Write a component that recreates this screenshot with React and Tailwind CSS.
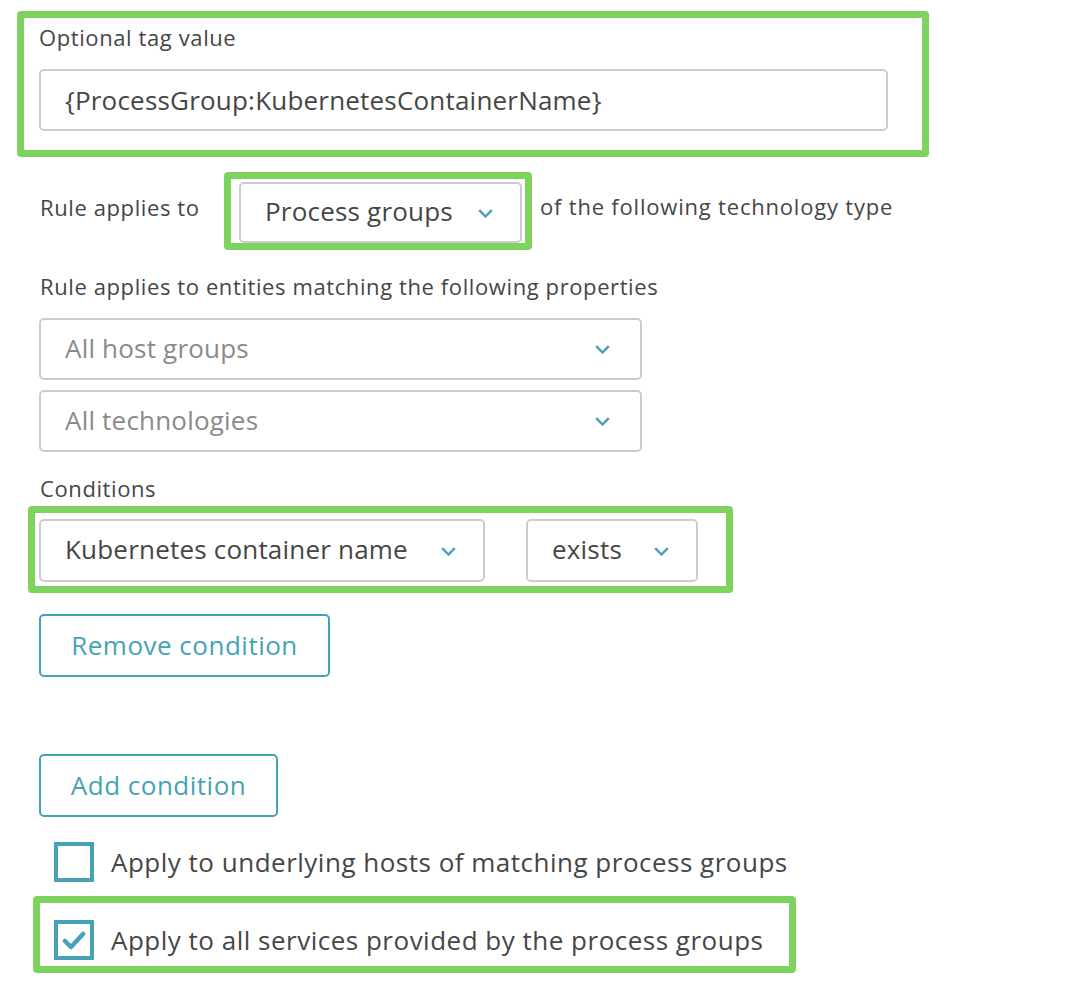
import React from "react";

const Chevron = () => (
  <svg width="15" height="9" viewBox="0 0 15 9" fill="none" className="shrink-0 mt-[4px]">
    <path d="M1.2 1.2 L7.5 7.5 L13.8 1.2" stroke="#45a3b5" strokeWidth="2.4" />
  </svg>
);

const Select = ({ label, muted = false, className = "" }) => (
  <div
    className={`flex items-center justify-between border-2 border-[#cccccc] rounded-[5px] bg-white pl-[24px] pr-[27px] pb-[3px] ${className}`}
  >
    <span className={`text-[26px] leading-none tracking-[0.2px] ${muted ? "text-[#8a8a8a]" : "text-[#454646]"}`}>
      {label}
    </span>
    <Chevron />
  </div>
);

export default function App() {
  return (
    <div
      className="w-[1078px] h-[1000px] bg-white text-[#454646] overflow-hidden"
      style={{ fontFamily: '"Open Sans", "Noto Sans", Arial, sans-serif' }}
    >
      {/* Optional tag value */}
      <div className="ml-[17px] mt-[11px] w-[912px] h-[146px] border-[7px] border-[#7ed35f] rounded-[4px] pl-[15px] pt-[5px]">
        <div className="text-[22px] leading-[28px] tracking-[0.6px]">Optional tag value</div>
        <div className="mt-[18px] w-[849px] h-[62px] border-2 border-[#cccccc] rounded-[5px] flex items-center pl-[24px]">
          <span className="text-[26px] leading-none tracking-[0.2px]">{"{ProcessGroup:KubernetesContainerName}"}</span>
        </div>
      </div>

      {/* Rule applies to row */}
      <div className="mt-[15px] flex items-start">
        <div className="ml-[40px] w-[184px] mt-[21px] text-[22px] leading-[28px] tracking-[0.6px]">Rule applies to</div>
        <div className="w-[308px] h-[78px] border-[7px] border-[#7ed35f] rounded-[4px] pl-[8px] pt-[3px]">
          <Select label="Process groups" className="w-[283px] h-[61px]" />
        </div>
        <div className="ml-[8px] mt-[20px] text-[22px] leading-[28px] tracking-[0.8px]">of the following technology type</div>
      </div>

      <div className="ml-[40px] mt-[22px] text-[22px] leading-[28px] tracking-[0.6px]">
        Rule applies to entities matching the following properties
      </div>

      <div className="ml-[39px] mt-[18px] flex flex-col gap-[10px]">
        <Select label="All host groups" muted className="w-[603px] h-[62px] pr-[30px]" />
        <Select label="All technologies" muted className="w-[603px] h-[62px] pr-[30px]" />
      </div>

      <div className="ml-[40px] mt-[22px] text-[22px] leading-[28px] tracking-[0.6px]">Conditions</div>

      <div className="ml-[28px] mt-[4px] w-[705px] h-[87px] border-[7px] border-[#7ed35f] rounded-[4px] pl-[4px] pt-[6px] flex items-start">
        <Select label="Kubernetes container name" className="w-[446px] h-[63px]" />
        <Select label="exists" className="ml-[41px] w-[172px] h-[63px]" />
      </div>

      <button className="ml-[39px] mt-[21px] w-[291px] h-[63px] border-2 border-[#45a3b5] rounded-[5px] text-[#45a3b5] text-[26px] leading-none tracking-[0.5px] flex items-center justify-center pb-[2px]">
        Remove condition
      </button>

      <button className="ml-[39px] mt-[77px] w-[239px] h-[63px] border-2 border-[#45a3b5] rounded-[5px] text-[#45a3b5] text-[26px] leading-none tracking-[0.5px] flex items-center justify-center pb-[2px]">
        Add condition
      </button>

      <div className="ml-[54px] mt-[25px] flex items-center h-[40px]">
        <div className="w-[40px] h-[40px] border-[4px] border-[#45a3b5] bg-white shrink-0" />
        <span className="ml-[17px] text-[26px] leading-none tracking-[0.5px]">
          Apply to underlying hosts of matching process groups
        </span>
      </div>

      <div className="ml-[33px] mt-[14px] w-[763px] h-[77px] border-[7px] border-[#7ed35f] rounded-[4px] pl-[14px] pt-[17px]">
        <div className="flex items-center h-[40px]">
          <div className="w-[40px] h-[40px] border-[4px] border-[#45a3b5] bg-white flex items-center justify-center shrink-0">
            <svg width="24" height="20" viewBox="0 0 24 20">
              <path d="M3 11 L9 17 L21 4" stroke="#45a3b5" strokeWidth="4.5" fill="none" strokeLinecap="round" strokeLinejoin="round" />
            </svg>
          </div>
          <span className="ml-[17px] text-[26px] leading-none tracking-[0.5px]">
            Apply to all services provided by the process groups
          </span>
        </div>
      </div>
    </div>
  );
}
